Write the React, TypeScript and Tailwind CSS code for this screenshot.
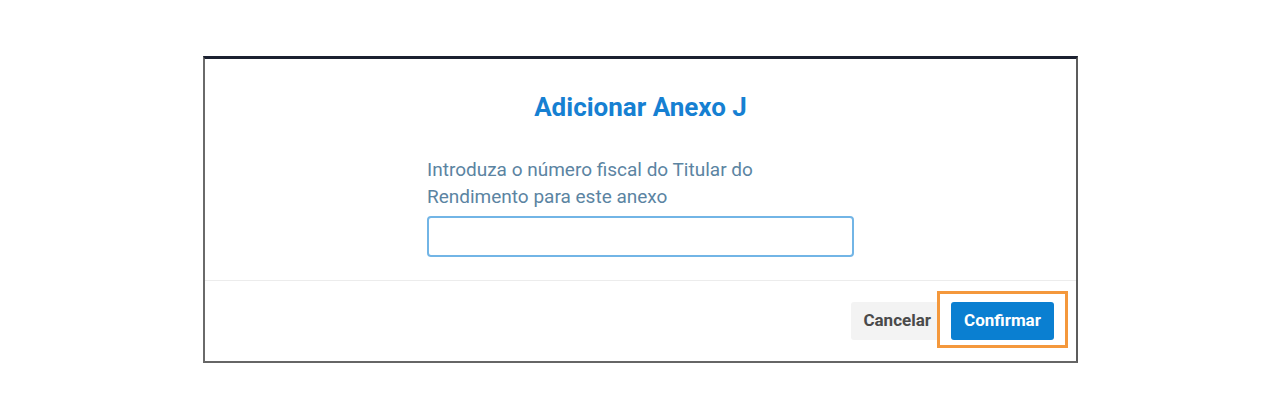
import React from "react";

export default function App() {
  return (
    <div className="w-[1274px] h-[410px] bg-white pt-[56px] pl-[203px] font-['Roboto',sans-serif]">
      <div className="w-[875px] h-[307px] flex flex-col bg-white border-t-[3px] border-t-[#1b2030] border-l-2 border-l-[#6a6a6a] border-r-2 border-r-[#5c5c5c] border-b-2 border-b-[#666666]">
        {/* Body */}
        <div className="flex flex-col items-center pt-[33px] pb-[23px] border-b border-[#ececec]">
          <h2 className="text-[26px] leading-[30px] font-bold text-[#1680d2]">Adicionar Anexo J</h2>
          <div className="w-[427px] mt-[34px]">
            <p className="text-[19px] leading-[27px] text-[#5b84a2]">
              Introduza o número fiscal do Titular do
              <br />
              Rendimento para este anexo
            </p>
            <input
              type="text"
              className="mt-[6px] w-full h-[41px] rounded-[4px] border-2 border-[#72b5e6] outline-none px-2"
            />
          </div>
        </div>

        {/* Footer */}
        <div className="flex-1 flex items-center justify-end pr-[22px] gap-[8px]">
          <button className="h-[38px] px-[12px] rounded-[3px] bg-[#f3f3f3] text-[17px] font-bold text-[#4a4a4a]">
            Cancelar
          </button>
          <div className="relative">
            <div className="absolute -left-[14px] -right-[14px] -top-[11px] -bottom-[8px] bg-white border-[3px] border-[#f4983c]" />
            <button className="relative h-[38px] w-[103px] rounded-[3px] bg-[#0a7fd1] text-[17px] font-bold text-white">
              Confirmar
            </button>
          </div>
        </div>
      </div>
    </div>
  );
}
